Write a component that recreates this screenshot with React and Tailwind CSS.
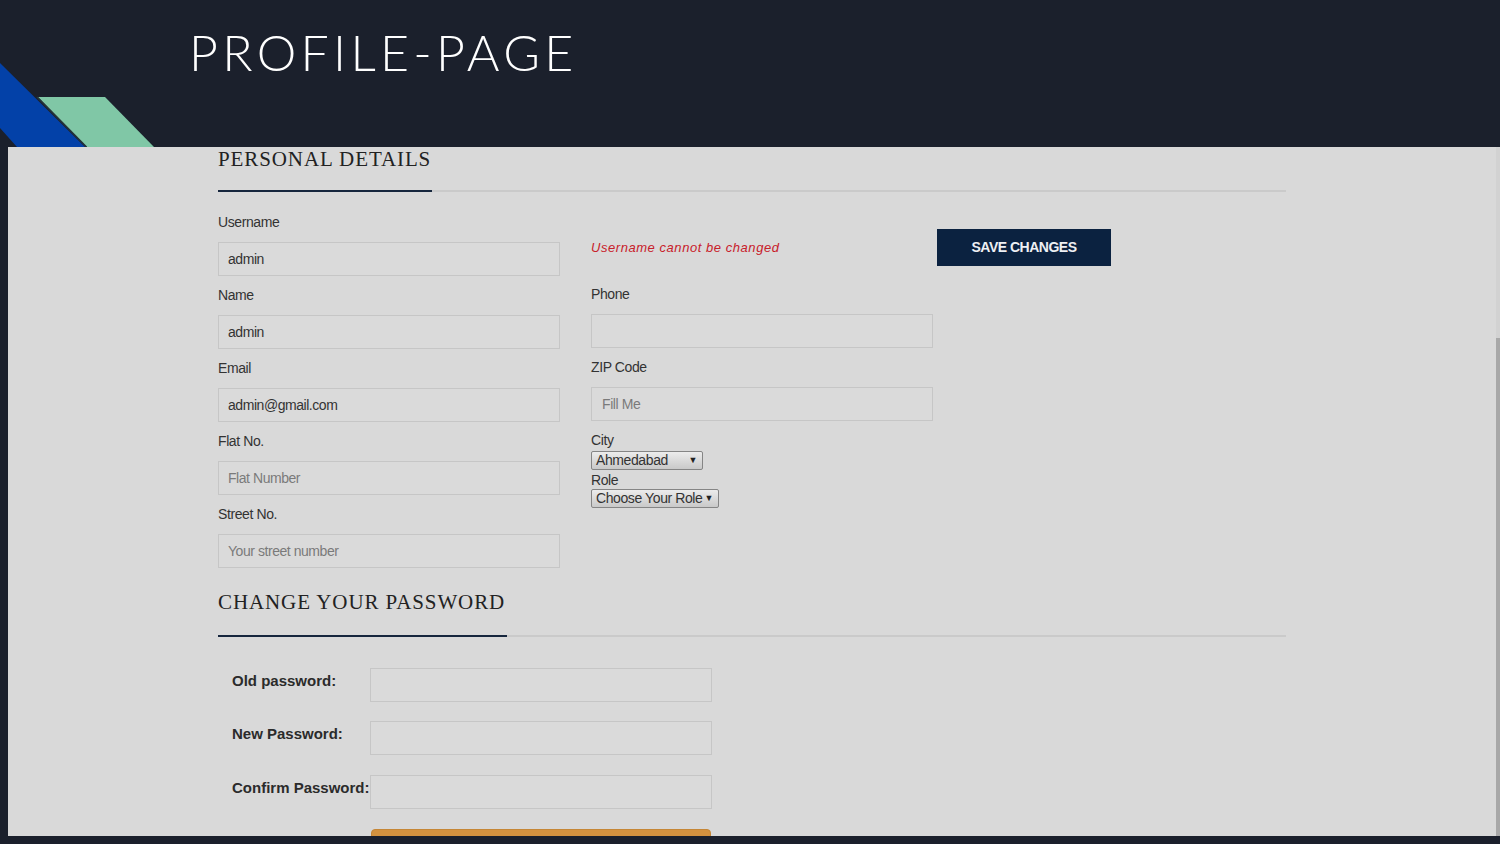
import React from 'react';

const sans = { fontFamily: '"Liberation Sans", Arial, sans-serif' };

const Field = ({ label, value, placeholder, first }) => (
  <div className={first ? 'mt-[20px]' : 'mt-[9px]'}>
    <div className="h-[20px] text-[14px] leading-[20px] tracking-[-0.4px] text-[#333]">{label}</div>
    <div className="mt-[10px] flex h-[34px] w-[342px] items-center border border-[#c6c6c6] bg-[#dadada] pl-[9px] text-[14px] tracking-[-0.45px]">
      {value ? <span className="text-[#333]">{value}</span> : <span className="text-[#7a7a7a]">{placeholder}</span>}
    </div>
  </div>
);

const FakeSelect = ({ value, width }) => (
  <div
    className={`flex h-[19px] items-center justify-between rounded-[2px] border border-[#858585] bg-gradient-to-b from-[#ececec] to-[#c9c9c9] pl-[4px] pr-[5px] text-[14px] leading-[17px] tracking-[-0.4px] text-[#333] ${width}`}
  >
    <span>{value}</span>
    <span className="text-[9px] text-[#222]">▼</span>
  </div>
);

const SectionHeading = ({ title, darkWidth, gap = 'mt-[21px]' }) => (
  <div>
    <div
      className="h-[24px] text-[21px] leading-[24px] tracking-[0.9px] text-[#222]"
      style={{ fontFamily: '"Liberation Serif", "Times New Roman", serif' }}
    >
      {title}
    </div>
    <div className={`${gap} flex w-[1068px] items-center`}>
      <div className={`h-[2px] bg-[#16263d] ${darkWidth}`} />
      <div className="h-[2px] flex-1 bg-[#cacaca]" />
    </div>
  </div>
);

const PasswordRow = ({ label, className = '' }) => (
  <div className={`flex ${className}`}>
    <div className="w-[152px] pl-[14px] pt-[3px] text-[15px] font-bold leading-[20px] text-[#2b2b2b]">
      {label}
    </div>
    <div className="h-[34px] w-[342px] border border-[#c6c6c6] bg-[#dadada]" />
  </div>
);

export default function App() {
  return (
    <div className="flex h-[844px] w-[1500px] flex-col overflow-hidden bg-[#1b202c]" style={sans}>
      {/* slide header */}
      <div className="relative h-[147px] shrink-0">
        <svg className="absolute left-0 top-0" width="170" height="147" viewBox="0 0 170 147">
          <polygon points="0,63 85,147 17,147 0,128" fill="#0341a8" />
          <polygon points="38,97 105,97 154,147 87,147" fill="#80c7a6" />
          <line x1="37" y1="97" x2="86.5" y2="147" stroke="#24343a" strokeWidth="1.6" />
        </svg>
        <div
          className="pl-[189px] pt-[22px] text-[50px] font-light leading-[60px] tracking-[4.3px] text-white"
          style={{ fontFamily: 'Lato, "Open Sans", sans-serif' }}
        >
          PROFILE-PAGE
        </div>
      </div>

      {/* embedded page */}
      <div className="ml-[8px] flex h-[689px] shrink-0">
        <div className="flex-1 overflow-hidden bg-[#d9d9d9] pl-[210px]">
          <SectionHeading title="PERSONAL DETAILS" darkWidth="w-[214px]" gap="mt-[19px]" />

          <div className="flex">
            <div className="w-[342px]">
              <Field first label="Username" value="admin" />
              <Field label="Name" value="admin" />
              <Field label="Email" value="admin@gmail.com" />
              <Field label="Flat No." placeholder="Flat Number" />
              <Field label="Street No." placeholder="Your street number" />
            </div>

            <div className="ml-[31px] w-[342px]">
              <div className="mt-[46px] h-[20px] text-[13px] italic leading-[20px] tracking-[0.55px] text-[#c8202a]">
                Username cannot be changed
              </div>
              <div className="mt-[26px] h-[20px] text-[14px] leading-[20px] tracking-[-0.4px] text-[#333]">Phone</div>
              <div className="mt-[10px] h-[34px] w-[342px] border border-[#c6c6c6] bg-[#dadada]" />
              <div className="mt-[9px] h-[20px] text-[14px] leading-[20px] tracking-[-0.4px] text-[#333]">ZIP Code</div>
              <div className="mt-[10px] flex h-[34px] w-[342px] items-center border border-[#c6c6c6] bg-[#dadada] pl-[10px] text-[14px] tracking-[-0.4px] text-[#7a7a7a]">
                Fill Me
              </div>
              <div className="mt-[10px] h-[18px] text-[14px] leading-[18px] tracking-[-0.4px] text-[#333]">City</div>
              <div className="mt-[2px]">
                <FakeSelect value="Ahmedabad" width="w-[112px]" />
              </div>
              <div className="mt-[1px] h-[18px] text-[14px] leading-[18px] tracking-[-0.4px] text-[#333]">Role</div>
              <FakeSelect value="Choose Your Role" width="w-[128px]" />
            </div>

            <div className="ml-[4px] mt-[37px]">
              <button className="flex h-[37px] w-[174px] items-center justify-center bg-[#0b2240] text-[14px] font-bold tracking-[-0.5px] text-[#eef0f3]">
                SAVE CHANGES
              </button>
            </div>
          </div>

          <div className="mt-[22px]">
            <SectionHeading title="CHANGE YOUR PASSWORD" darkWidth="w-[289px]" />
          </div>

          <PasswordRow label="Old password:" className="mt-[31px]" />
          <PasswordRow label="New Password:" className="mt-[19px]" />
          <PasswordRow label="Confirm Password:" className="mt-[20px]" />

          <div className="ml-[153px] mt-[20px] h-[40px] w-[340px] rounded-t-[4px] border border-[#c58636] bg-[#d4923f]" />
        </div>

        {/* scrollbar */}
        <div className="flex w-[4px] flex-col bg-[#d2d2d2]">
          <div className="mt-[191px] flex-1 bg-[#a8a8a8]" />
        </div>
      </div>
    </div>
  );
}
